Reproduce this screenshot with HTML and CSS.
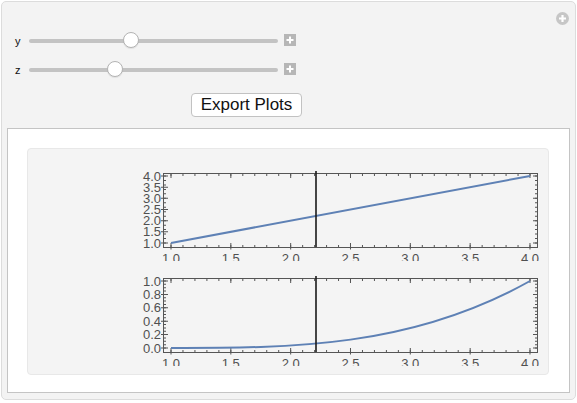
FILE: index.html
```html
<!DOCTYPE html>
<html>
<head>
<meta charset="utf-8">
<link rel="stylesheet" href="styles.css">
</head>
<body>
<div class="panel">
  <div class="topbar">
    <svg class="addbtn" width="13" height="13" viewBox="0 0 13 13"><circle cx="6.5" cy="6.5" r="6.5" fill="#c6c6c6"/><path d="M6.5 3v7M3 6.5h7" stroke="#fff" stroke-width="2.2"/></svg>
  </div>
  <div class="controls">
    <div class="row">
      <span class="lbl">y</span>
      <div class="track"><span class="thumb thumb-y"></span></div>
      <span class="plus"><svg width="12" height="12" viewBox="0 0 12 12"><path d="M6 2.5v7M2.5 6h7" stroke="#fff" stroke-width="2"/></svg></span>
    </div>
    <div class="row">
      <span class="lbl">z</span>
      <div class="track"><span class="thumb thumb-z"></span></div>
      <span class="plus"><svg width="12" height="12" viewBox="0 0 12 12"><path d="M6 2.5v7M2.5 6h7" stroke="#fff" stroke-width="2"/></svg></span>
    </div>
  </div>
  <button class="export">Export Plots</button>
  <div class="outbox">
    <div class="plotarea">
      <svg class="plot" width="520" height="112" viewBox="1 1 520 112">
        <g stroke="#555" fill="none">
          <rect x="136.5" y="25.5" width="374" height="74" stroke-width="1"/>
          <line x1="143.5" y1="97" x2="504" y2="97" stroke-width="4" stroke-dasharray="1 58.83"/>
          <line x1="143.5" y1="98" x2="504" y2="98" stroke-width="2" stroke-dasharray="1 10.967"/>
          <line x1="143.5" y1="100.5" x2="504" y2="100.5" stroke-width="2" stroke-dasharray="1 58.83"/>
          <line x1="143.5" y1="28" x2="504" y2="28" stroke-width="4" stroke-dasharray="1 58.83"/>
          <line x1="143.5" y1="27" x2="504" y2="27" stroke-width="2" stroke-dasharray="1 10.967"/>
          <line x1="139" y1="95.5" x2="139" y2="27" stroke-width="4" stroke-dasharray="1 10.167"/>
          <line x1="138" y1="95.5" x2="138" y2="27" stroke-width="2" stroke-dasharray="1 3.467"/>
          <line x1="135" y1="95.5" x2="135" y2="27" stroke-width="2" stroke-dasharray="1 10.167"/>
          <line x1="508" y1="95.5" x2="508" y2="27" stroke-width="4" stroke-dasharray="1 21.33"/>
          <line x1="509" y1="95.5" x2="509" y2="27" stroke-width="2" stroke-dasharray="1 3.467"/>
        </g>
        <path d="M144 95L503 28" stroke="#5e81b5" stroke-width="2" fill="none"/>
        <line x1="289" y1="23" x2="289" y2="99" stroke="#1a1a1a" stroke-width="1.6"/>
        <g class="ylab" text-anchor="end">
          <text x="134" y="99.5">1.0</text>
          <text x="134" y="88.3">1.5</text>
          <text x="134" y="77.2">2.0</text>
          <text x="134" y="66">2.5</text>
          <text x="134" y="54.8">3.0</text>
          <text x="134" y="43.7">3.5</text>
          <text x="134" y="32.5">4.0</text>
        </g>
        <g class="xlab" text-anchor="middle">
          <text x="144" y="115">1.0</text>
          <text x="203.8" y="115">1.5</text>
          <text x="263.7" y="115">2.0</text>
          <text x="323.5" y="115">2.5</text>
          <text x="383.3" y="115">3.0</text>
          <text x="443.2" y="115">3.5</text>
          <text x="503" y="115">4.0</text>
        </g>
      </svg>
      <svg class="plot" width="520" height="101" viewBox="1 117 520 101">
        <g stroke="#555" fill="none">
          <rect x="136.5" y="130.5" width="374" height="74" stroke-width="1"/>
          <line x1="143.5" y1="202" x2="504" y2="202" stroke-width="4" stroke-dasharray="1 58.83"/>
          <line x1="143.5" y1="203" x2="504" y2="203" stroke-width="2" stroke-dasharray="1 10.967"/>
          <line x1="143.5" y1="205.5" x2="504" y2="205.5" stroke-width="2" stroke-dasharray="1 58.83"/>
          <line x1="143.5" y1="133" x2="504" y2="133" stroke-width="4" stroke-dasharray="1 58.83"/>
          <line x1="143.5" y1="132" x2="504" y2="132" stroke-width="2" stroke-dasharray="1 10.967"/>
          <line x1="139" y1="200.5" x2="139" y2="132" stroke-width="4" stroke-dasharray="1 12.4"/>
          <line x1="138" y1="200.5" x2="138" y2="132" stroke-width="2" stroke-dasharray="1 2.35"/>
          <line x1="135" y1="200.5" x2="135" y2="132" stroke-width="2" stroke-dasharray="1 12.4"/>
          <line x1="508" y1="200.5" x2="508" y2="132" stroke-width="4" stroke-dasharray="1 12.4"/>
          <line x1="509" y1="200.5" x2="509" y2="132" stroke-width="2" stroke-dasharray="1 2.35"/>
        </g>
        <path d="M144 200C263.67 200 383.33 200 503 133" stroke="#5e81b5" stroke-width="2" fill="none"/>
        <line x1="289" y1="128" x2="289" y2="204" stroke="#1a1a1a" stroke-width="1.6"/>
        <g class="ylab" text-anchor="end">
          <text x="134" y="204.5">0.0</text>
          <text x="134" y="191.1">0.2</text>
          <text x="134" y="177.7">0.4</text>
          <text x="134" y="164.3">0.6</text>
          <text x="134" y="150.9">0.8</text>
          <text x="134" y="137.5">1.0</text>
        </g>
        <g class="xlab" text-anchor="middle">
          <text x="144" y="220">1.0</text>
          <text x="203.8" y="220">1.5</text>
          <text x="263.7" y="220">2.0</text>
          <text x="323.5" y="220">2.5</text>
          <text x="383.3" y="220">3.0</text>
          <text x="443.2" y="220">3.5</text>
          <text x="503" y="220">4.0</text>
        </g>
      </svg>
    </div>
  </div>
</div>
</body>
</html>
```

FILE: styles.css
```css
html, body {
  margin: 0;
  padding: 0;
  background: #ffffff;
}
.panel {
  box-sizing: border-box;
  width: 575px;
  height: 399px;
  margin: 1px 1px 0 1px;
  border: 1px solid #dcdcdc;
  border-radius: 5px;
  background: #f3f3f3;
  padding: 0 5px 6px 5px;
  font-family: "Liberation Sans", Arial, sans-serif;
}
.topbar {
  height: 29px;
  display: flex;
  justify-content: flex-end;
  align-items: flex-start;
}
.addbtn {
  display: block;
  margin-top: 10px;
  margin-right: 1px;
}
.controls {
  display: flex;
  flex-direction: column;
  gap: 9px;
}
.row {
  height: 20px;
  display: flex;
  align-items: center;
}
.lbl {
  width: 22px;
  box-sizing: border-box;
  padding-left: 8px;
  font-size: 11px;
  color: #111;
}
.track {
  position: relative;
  width: 249px;
  height: 4px;
  border-radius: 2px;
  background: #c3c3c3;
}
.thumb {
  position: absolute;
  top: -7px;
  width: 16px;
  height: 16px;
  box-sizing: border-box;
  border-radius: 50%;
  background: #ffffff;
  border: 1px solid #b3b3b3;
  box-shadow: 0 1px 1px rgba(0,0,0,0.08);
}
.thumb-y { left: 94px; }
.thumb-z { left: 78px; }
.plus {
  display: block;
  width: 12px;
  height: 12px;
  margin-left: 6px;
  margin-top: -2px;
  background: #b6b6b6;
}
.plus svg { display: block; }
.export {
  display: block;
  box-sizing: border-box;
  margin: 13px 0 0 184px;
  width: 111px;
  height: 24px;
  padding: 0;
  border: 1px solid #c2c2c2;
  border-radius: 4px;
  background: #ffffff;
  font-family: "Liberation Sans", Arial, sans-serif;
  font-size: 17px;
  color: #111;
}
.outbox {
  box-sizing: border-box;
  margin-top: 11px;
  width: 563px;
  height: 265px;
  border: 1px solid #c4c4c4;
  background: #ffffff;
  padding: 19px 20px 0 19px;
}
.plotarea {
  box-sizing: border-box;
  width: 522px;
  height: 227px;
  border: 1px solid #e8e8e8;
  border-radius: 4px;
  background: #f4f4f4;
  display: flex;
  flex-direction: column;
  gap: 4px;
}
.plot {
  display: block;
}
.ylab text, .xlab text {
  font-family: "Liberation Sans", Arial, sans-serif;
  font-size: 13px;
  fill: #505050;
}
```
